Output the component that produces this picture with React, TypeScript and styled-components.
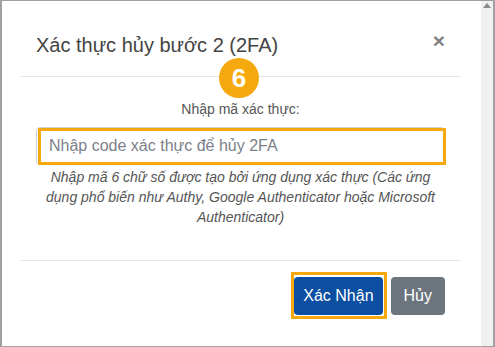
import * as React from 'react';
import styled, { createGlobalStyle } from 'styled-components';

const GlobalStyle = createGlobalStyle`
    html, body {
        margin: 0;
        padding: 0;
        background: #fff;
    }
    body {
        font-family: "Liberation Sans", Arial, Helvetica, sans-serif;
    }
`;

const WindowFrame = styled('div')`
    height: 100vh;
    box-sizing: border-box;
    border-style: solid;
    border-color: #a0a0a0;
    border-width: 1px 2px;
    display: flex;
    overflow: hidden;
`;

const PageArea = styled('div')`
    flex: 1;
    background: #fff;
    padding: 0 20px 0 18px;
`;

const ScrollTrack = styled('div')`
    width: 12px;
    background: #f0f0f0;
    display: flex;
    justify-content: center;
    padding-top: 2px;
    box-sizing: border-box;
`;

const Dialog = styled('div')`
    position: relative;
`;

const Header = styled('div')`
    display: flex;
    justify-content: space-between;
    align-items: flex-start;
    padding: 30px 16px 16px 16px;
    border-bottom: 1px solid #e5e5e5;
`;

const Title = styled('h4')`
    margin: 0;
    font-size: 20px;
    font-weight: 400;
    line-height: 28.5px;
    color: #444;
`;

const CloseButton = styled('button')`
    border: 0;
    background: transparent;
    padding: 0;
    margin-top: -1px;
    font-family: inherit;
    font-size: 21px;
    font-weight: 700;
    line-height: 21px;
    color: #000;
    opacity: 0.5;
    cursor: pointer;
`;

const StepBadge = styled('div')`
    position: absolute;
    left: 199px;
    top: 57px;
    width: 40px;
    height: 40px;
    border-radius: 50%;
    background: #f5a90f;
    color: #fff;
    font-size: 26px;
    font-weight: 700;
    display: flex;
    align-items: center;
    justify-content: center;
`;

const Body = styled('div')`
    padding: 22px 16px 33px 16px;
    text-align: center;
    border-bottom: 1px solid #e5e5e5;
`;

const FieldLabel = styled('label')`
    display: block;
    font-size: 14px;
    line-height: 20px;
    color: #555;
    margin-bottom: 8px;
`;

const InputWrap = styled('div')`
    position: relative;
`;

const CodeInput = styled('input')`
    display: block;
    width: 100%;
    box-sizing: border-box;
    height: 38px;
    padding: 6px 12px;
    border: 1px solid #ced4da;
    border-radius: 4px;
    font-family: inherit;
    font-size: 16px;
    color: #495057;
    outline: none;
    &::placeholder {
        color: #7b8189;
    }
`;

const Highlight = styled('div')<{ inset: string }>`
    position: absolute;
    inset: ${props => props.inset};
    border: 3px solid #f5a90f;
    pointer-events: none;
`;

const HelpText = styled('p')`
    margin: 2px 0 0 0;
    font-size: 14px;
    line-height: 20px;
    font-style: italic;
    color: #555;
`;

const Footer = styled('div')`
    display: flex;
    justify-content: flex-end;
    gap: 8px;
    padding: 16px 16px;
`;

const ButtonWrap = styled('div')`
    position: relative;
    display: flex;
`;

const ActionButton = styled('button')<{ variant: 'primary' | 'secondary' }>`
    height: 38px;
    padding: 0 ${props => props.variant === 'primary' ? '9px' : '13px'};
    border: 0;
    border-radius: 4px;
    font-family: inherit;
    font-size: 16px;
    color: #fff;
    background: ${props => props.variant === 'primary' ? '#0b4ea2' : '#6c757d'};
    cursor: pointer;
`;

const ArrowUp = () => (
    <svg width="8" height="5" viewBox="0 0 8 5">
        <path d="M4 0 L8 5 L0 5 Z" fill="#8a8a8a" />
    </svg>
);

export default function App() {
    return (
        <>
            <GlobalStyle />
            <WindowFrame>
                <PageArea>
                    <Dialog>
                        <Header>
                            <Title>Xác thực hủy bước 2 (2FA)</Title>
                            <CloseButton aria-label="Close">×</CloseButton>
                        </Header>
                        <StepBadge>6</StepBadge>
                        <Body>
                            <FieldLabel>Nhập mã xác thực:</FieldLabel>
                            <InputWrap>
                                <CodeInput placeholder="Nhập code xác thực để hủy 2FA" />
                                <Highlight inset="1px -1px 0 2px" />
                            </InputWrap>
                            <HelpText>
                                Nhập mã 6 chữ số được tạo bởi ứng dụng xác thực (Các ứng dụng phổ biến như Authy, Google Authenticator hoặc Microsoft Authenticator)
                            </HelpText>
                        </Body>
                        <Footer>
                            <ButtonWrap>
                                <ActionButton variant="primary">Xác Nhận</ActionButton>
                                <Highlight inset="-5px -4px -4px -3px" />
                            </ButtonWrap>
                            <ActionButton variant="secondary">Hủy</ActionButton>
                        </Footer>
                    </Dialog>
                </PageArea>
                <ScrollTrack>
                    <ArrowUp />
                </ScrollTrack>
            </WindowFrame>
        </>
    );
}
